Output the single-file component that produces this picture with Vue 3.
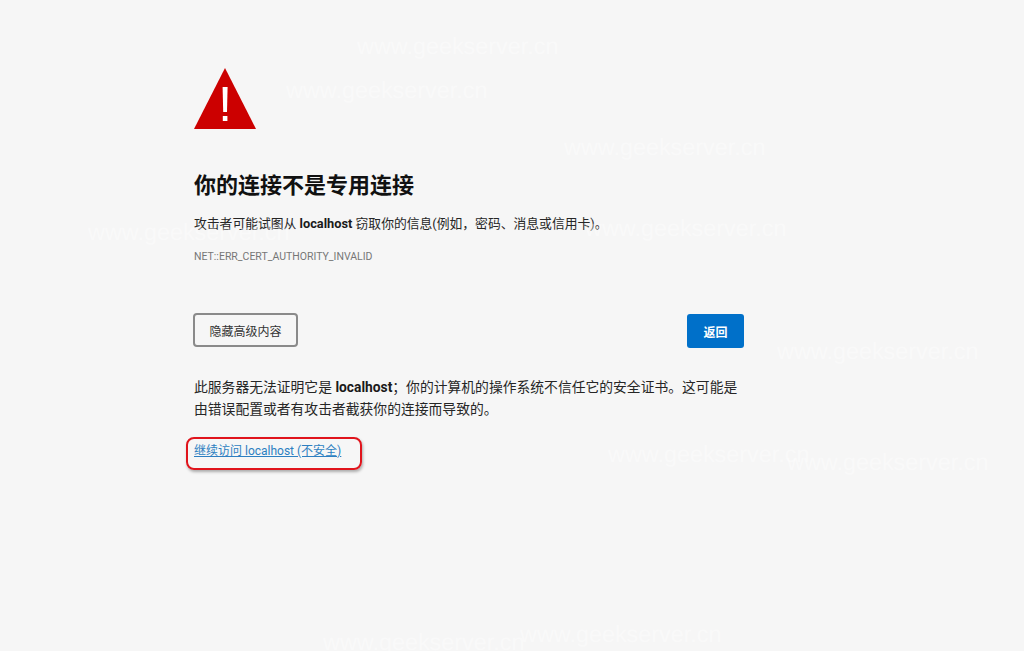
<script setup>
const marks = [
  { x: 357, y: 33 }, { x: 286, y: 77 }, { x: 564, y: 134 }, { x: 88, y: 219 }, { x: 585, y: 215 },
  { x: 777, y: 338 }, { x: 608, y: 441 }, { x: 787, y: 449 }, { x: 323, y: 629 }, { x: 520, y: 621 }
]
</script>

<template>
  <main class="page">
    <section class="content">
      <svg class="warn" width="62" height="62" viewBox="0 0 62 62" aria-hidden="true">
        <path d="M31 1 L62 62 L0 62 Z" fill="#cc0000" />
        <path d="M28.6 20 H33.6 L33 45 H29.2 Z" fill="#fff" />
        <rect x="28.8" y="49" width="4.6" height="5" fill="#fff" />
      </svg>
      <h1>你的连接不是专用连接</h1>
      <p class="lead">攻击者可能试图从 <b>localhost</b> 窃取你的信息(例如，密码、消息或信用卡)。</p>
      <p class="code">NET::ERR_CERT_AUTHORITY_INVALID</p>
      <div class="actions">
        <button class="ghost">隐藏高级内容</button>
        <button class="primary">返回</button>
      </div>
      <p class="detail">此服务器无法证明它是 <b>localhost</b>；你的计算机的操作系统不信任它的安全证书。这可能是由错误配置或者有攻击者截获你的连接而导致的。</p>
      <div class="link-row">
        <a class="proceed" href="#">继续访问 localhost (不安全)</a>
        <span class="annotation"></span>
      </div>
    </section>
    <span v-for="m in marks" :key="m.x" class="mark" :style="{ left: m.x + 'px', top: m.y + 'px' }">www.geekserver.cn</span>
  </main>
</template>

<style>
html, body { margin: 0; background: #f6f6f6; }
</style>

<style scoped>
.page {
  position: relative;
  width: 1024px;
  height: 651px;
  overflow: hidden;
  background: #f6f6f6;
  font-family: Roboto, "Noto Sans CJK SC", sans-serif;
  color: #262626;
}
.content {
  width: 550px;
  margin-left: 194px;
  padding-top: 67px;
}
.warn { display: block; }
h1 {
  margin: 39px 0 0;
  font-size: 22px;
  line-height: 30px;
  font-weight: 700;
  color: #111;
  font-family: "Noto Sans CJK SC", sans-serif;
}
.lead {
  margin: 16px 0 0;
  font-size: 12.8px;
  line-height: 20px;
}
.lead b, .detail b { font-weight: 700; color: #1a1a1a; }
.code {
  margin: 15px 0 0;
  font-size: 10.5px;
  line-height: 16px;
  color: #767676;
}
.actions {
  display: flex;
  justify-content: space-between;
  align-items: flex-start;
  margin: 49px 0 0 -1px;
}
button {
  height: 34px;
  border-radius: 3px;
  font-family: "Noto Sans CJK SC", sans-serif;
  font-size: 12px;
  padding: 0;
}
.ghost {
  width: 105px;
  margin-top: -1px;
  border: 2px solid #8a8a8a;
  border-radius: 4px;
  background: #f6f6f6;
  color: #333;
}
.primary {
  width: 57px;
  border: none;
  background: #0070c9;
  color: #fff;
  font-weight: 700;
}
.detail {
  margin: 28px 0 0;
  font-size: 13.8px;
  line-height: 22px;
}
.link-row {
  position: relative;
  margin-top: 21px;
  height: 20px;
  font-size: 12px;
  line-height: 20px;
}
.proceed {
  color: #2d7fc1;
  text-decoration: underline;
}
.annotation {
  position: absolute;
  left: -8px;
  top: -4px;
  width: 172px;
  height: 29px;
  border: 2px solid #e0141c;
  border-radius: 8px;
  box-shadow: 1px 2px 3px rgba(0, 0, 0, 0.3);
}
.mark {
  position: absolute;
  font-family: "Liberation Sans", sans-serif;
  font-size: 23.4px;
  line-height: 27px;
  color: rgba(255, 255, 255, 0.4);
  white-space: nowrap;
  pointer-events: none;
  text-rendering: geometricPrecision;
}
</style>
